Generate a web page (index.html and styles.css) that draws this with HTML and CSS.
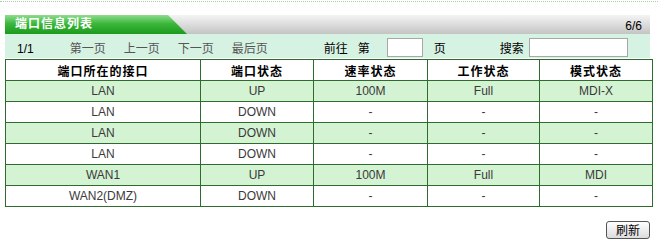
FILE: index.html
```
<!DOCTYPE html>
<html lang="zh">
<head>
	<title>端口信息列表</title>
	<meta charset="utf-8">
	<link rel="stylesheet" href="styles.css">
</head>
<body>
	<div class="topline"></div>
	<div id="wrapper">
		<div class="titlebar">
			<div class="tab">端口信息列表</div>
			<span class="count">6/6</span>
		</div>
		<div class="toolbar">
			<span class="pages">1/1</span>
			<a class="nav first">第一页</a>
			<a class="nav">上一页</a>
			<a class="nav">下一页</a>
			<a class="nav">最后页</a>
			<span class="goto">前往</span>
			<span class="di">第</span>
			<input type="text" class="pagebox">
			<span class="ye">页</span>
			<span class="search">搜索</span>
			<input type="text" class="searchbox">
		</div>
		<table class="ports">
			<tr class="head">
				<th class="c1">端口所在的接口</th>
				<th class="c2">端口状态</th>
				<th class="c3">速率状态</th>
				<th class="c4">工作状态</th>
				<th>模式状态</th>
			</tr>
			<tr class="odd"><td>LAN</td><td>UP</td><td>100M</td><td>Full</td><td>MDI-X</td></tr>
			<tr><td>LAN</td><td>DOWN</td><td>-</td><td>-</td><td>-</td></tr>
			<tr class="odd"><td>LAN</td><td>DOWN</td><td>-</td><td>-</td><td>-</td></tr>
			<tr><td>LAN</td><td>DOWN</td><td>-</td><td>-</td><td>-</td></tr>
			<tr class="odd"><td>WAN1</td><td>UP</td><td>100M</td><td>Full</td><td>MDI</td></tr>
			<tr><td>WAN2(DMZ)</td><td>DOWN</td><td>-</td><td>-</td><td>-</td></tr>
		</table>
		<div class="buttons">
			<button class="refresh">刷新</button>
		</div>
	</div>
</body>
</html>
```
FILE: styles.css
```
body {
	margin: 0;
	padding-top: 1px;
	background: white;
	font-family: "Liberation Sans", "Noto Sans CJK SC", sans-serif;
	font-size: 12px;
	color: #000;
}
.topline {
	border-top: 1px dotted #a6cfa6;
}
#wrapper {
	width: 647px;
	margin-left: 5px;
}

.titlebar {
	margin-top: 13px;
	width: 645px;
	height: 19px;
	display: flex;
	justify-content: space-between;
	align-items: flex-end;
	background: linear-gradient(#f4f4f4, #c4c4c4);
}
.tab {
	width: 172px;
	height: 19px;
	padding-left: 10px;
	line-height: 18px;
	color: white;
	font-weight: bold;
	letter-spacing: 1px;
	background: linear-gradient(#8fdc8f, #3cb83c 45%, #1c9a1c);
	clip-path: polygon(0 0, 163px 0, 182px 19px, 0 19px);
}
.count {
	padding-right: 8px;
	line-height: 15px;
}

.toolbar {
	width: 645px;
	height: 22px;
	padding-bottom: 2px;
	display: flex;
	align-items: flex-end;
	background: #d6f2e2;
	line-height: 14px;
}
.toolbar span, .toolbar a {
	margin-bottom: 0;
}
.pages {
	margin-left: 12px;
}
.nav {
	color: #555;
	margin-left: 18px;
}
.nav.first {
	margin-left: 36px;
}
.goto {
	margin-left: 56px;
}
.di {
	margin-left: 10px;
}
.pagebox, .searchbox {
	height: 19px;
	box-sizing: border-box;
	border: 1px solid #a8a8a8;
	background: white;
	padding: 0;
	margin: 0 0 -1px 0;
}
.pagebox {
	width: 36px;
	margin-left: 17px;
}
.ye {
	margin-left: 11px;
}
.search {
	margin-left: 54px;
}
.searchbox {
	width: 99px;
	margin-left: 5px;
}

.ports {
	margin-top: 1px;
	width: 648px;
	border-collapse: collapse;
	border: 1px solid #2f6a2f;
}
.ports th, .ports td {
	border: 1px solid #2f6a2f;
	height: 20px;
	padding: 0;
	text-align: center;
}
.ports th {
	font-weight: bold;
	letter-spacing: 1px;
	color: #000;
}
.ports td {
	color: #3a3a3a;
}
.ports .c1 {
	width: 194px;
}
.ports .c2 {
	width: 112px;
}
.ports .c3 {
	width: 113px;
}
.ports .c4 {
	width: 111px;
}
.ports tr.odd {
	background: #d3f3d3;
}

.buttons {
	display: flex;
	justify-content: flex-end;
	margin-top: 14px;
	width: 645px;
}
.refresh {
	width: 44px;
	height: 18px;
	padding: 0;
	font-family: "Noto Sans CJK SC", sans-serif;
	font-size: 12px;
	line-height: 14px;
	color: #000;
	background: linear-gradient(#ffffff, #dcdcdc);
	border: 1px solid #555;
	border-radius: 3px;
}
```
